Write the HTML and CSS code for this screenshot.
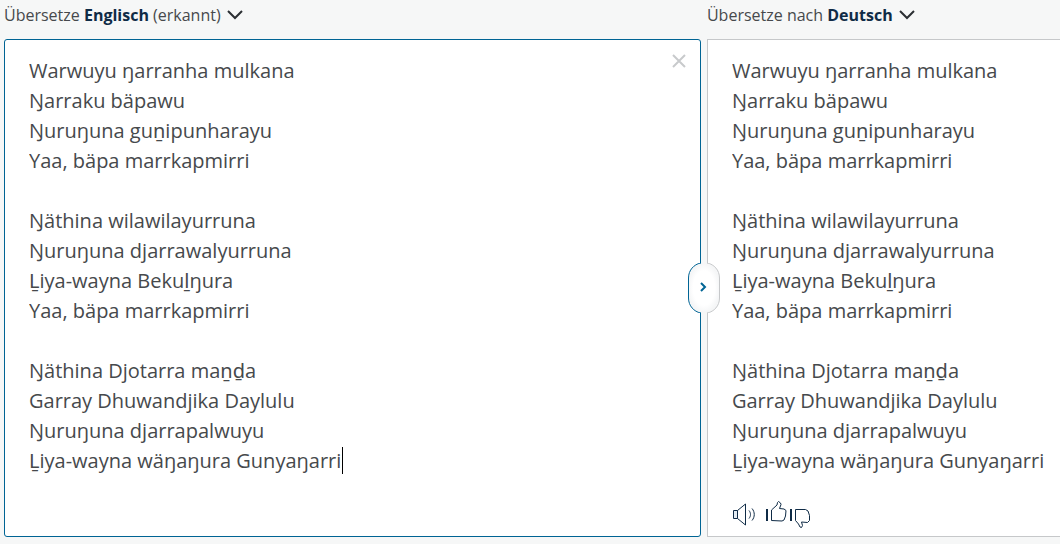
FILE: index.html
```html
<!DOCTYPE html>
<html lang="de">
<head>
  <meta charset="UTF-8" />
  <meta name="viewport" content="width=device-width, initial-scale=1.0" />
  <title>Übersetzer</title>
  <link rel="stylesheet" href="styles.css">
</head>
<body>
  <main class="translator">
    <section class="side">
      <header class="side-header">
        <button type="button" class="lang-btn">
          <span>Übersetze <strong>Englisch</strong> (erkannt)</span>
          <svg class="chevron" viewBox="0 0 16 10" aria-hidden="true"><path d="M1 1l7 7 7-7"/></svg>
        </button>
      </header>
      <div class="panel panel-source">
        <textarea class="text" id="source" rows="14" aria-label="Ausgangstext" spellcheck="false">Warwuyu ŋarranha mulkana
Ŋarraku bäpawu
Ŋuruŋuna guṉipunharayu
Yaa, bäpa marrkapmirri

Ŋäthina wilawilayurruna
Ŋuruŋuna djarrawalyurruna
Ḻiya-wayna Bekuḻŋura
Yaa, bäpa marrkapmirri

Ŋäthina Djotarra maṉḏa
Garray Dhuwandjika Daylulu
Ŋuruŋuna djarrapalwuyu
Ḻiya-wayna wäŋaŋura Gunyaŋarri</textarea>
        <span class="caret"></span>
        <button type="button" class="clear-btn" aria-label="Text löschen">
          <svg viewBox="0 0 14 14" aria-hidden="true"><path d="M1 1l12 12M13 1L1 13"/></svg>
        </button>
      </div>
      <!-- Swap languages -->
      <button type="button" class="swap-btn" aria-label="Sprachen tauschen">
        <svg viewBox="0 0 32 50" aria-hidden="true">
          <defs>
            <radialGradient id="swap-fill" cx="50%" cy="50%" r="50%">
              <stop offset="0.7" stop-color="#ffffff"/>
              <stop offset="1" stop-color="#f5f6f7"/>
            </radialGradient>
          </defs>
          <path class="swap-bg" d="M13 .5C6 1.5 .5 7 .5 15v20c0 8 5.5 13.5 12.5 14.5h6c7-1 12.5-6.5 12.5-14.5V15C31.5 7 26 1.5 19 .5z"/>
          <path class="swap-right" d="M19.5 0C26 1.5 31.5 7 31.5 15v20c0 8-5.5 13.5-12 15"/>
          <path class="swap-left" d="M12.5 0C6 1.5 .5 7 .5 15v20c0 8 5.5 13.5 12 15"/>
          <path class="swap-arrow" d="M13 20l4 4-4 4"/>
        </svg>
      </button>
    </section>

    <section class="side">
      <header class="side-header">
        <button type="button" class="lang-btn">
          <span>Übersetze nach <strong>Deutsch</strong></span>
          <svg class="chevron" viewBox="0 0 16 10" aria-hidden="true"><path d="M1 1l7 7 7-7"/></svg>
        </button>
      </header>
      <div class="panel panel-target">
        <textarea class="text" id="target" rows="14" aria-label="Übersetzung" spellcheck="false" readonly>Warwuyu ŋarranha mulkana
Ŋarraku bäpawu
Ŋuruŋuna guṉipunharayu
Yaa, bäpa marrkapmirri

Ŋäthina wilawilayurruna
Ŋuruŋuna djarrawalyurruna
Ḻiya-wayna Bekuḻŋura
Yaa, bäpa marrkapmirri

Ŋäthina Djotarra maṉḏa
Garray Dhuwandjika Daylulu
Ŋuruŋuna djarrapalwuyu
Ḻiya-wayna wäŋaŋura Gunyaŋarri</textarea>
        <div class="tools">
          <button type="button" class="tool-btn speak" aria-label="Vorlesen">
            <svg width="24" height="26" viewBox="0 0 24 26" aria-hidden="true">
              <path class="speaker-back" d="M1.5 9.5h4v8h-4z"/>
              <path d="M5.5 9.5l8-6.500v21l-8-6.500"/>
              <path d="M17 9.500c2 2.500 2 5.500 0 8M20 7.500c3 3.500 3 8.500 0 12"/>
            </svg>
          </button>
          <button type="button" class="tool-btn" aria-label="Gute Übersetzung">
            <svg width="22" height="26" viewBox="0 0 22 26" aria-hidden="true">
              <path class="bar" d="M2 8v12"/>
              <path d="M6.5 19.5V9l5.5-5 .5-2.5L13.5.5l2 1.500.5 1.500-1.500 4 4.500.5 2 1.500-.5 5.500-1.500 4-2 1z"/>
            </svg>
          </button>
          <button type="button" class="tool-btn" aria-label="Schlechte Übersetzung">
            <svg width="22" height="28" viewBox="0 0 22 28" aria-hidden="true">
              <path class="bar" d="M2 8v12"/>
              <path d="M6.5 8.500h10l2.500 1.500 1.500 4.500v5l-2 2-6-.5 1 3.500-1 2-1.500-.5-1.500-3-3-3.500z"/>
            </svg>
          </button>
        </div>
      </div>
    </section>
  </main>
</body>
</html>
```

FILE: styles.css
```css
*, *::before, *::after {
  box-sizing: border-box;
}

body {
  margin: 0;
  background: #f6f7f7;
  font-family: 'Open Sans', 'Noto Sans', sans-serif;
  color: #46494c;
  overflow-x: hidden;
}

button {
  margin: 0;
  padding: 0;
  border: 0;
  background: none;
  font: inherit;
  color: inherit;
  cursor: pointer;
}

.translator {
  display: grid;
  grid-template-columns: 66% 1fr;
  column-gap: 6px;
  padding: 0 0 7px 4px;
}

.side {
  position: relative;
  display: flex;
  flex-direction: column;
  min-width: 0;
}

.side-header {
  display: flex;
  height: 39px;
  padding-top: 4px;
}

.lang-btn {
  display: flex;
  align-items: center;
  gap: 6px;
  height: 22px;
  font-size: 16px;
  line-height: 22px;
  white-space: nowrap;
}

.lang-btn strong {
  color: #0f2b46;
}

.chevron {
  width: 16px;
  height: 10px;
  fill: none;
  stroke: #2b2f33;
  stroke-width: 2;
}

.panel {
  position: relative;
  flex: 1;
  padding: 16px 24px 0;
  background: #fff;
  border: 1px solid #c6c8ca;
}

.panel-source {
  border-color: #006494;
  border-radius: 3px;
}

.panel-target {
  border-right: 0;
  padding-right: 0;
}

.text {
  display: block;
  width: 100%;
  margin: 0;
  padding: 0;
  border: 0;
  outline: 0;
  resize: none;
  overflow: hidden;
  background: none;
  font: inherit;
  font-size: 20px;
  line-height: 30px;
  color: inherit;
}

.caret {
  position: absolute;
  top: 407px;
  left: 337px;
  width: 1px;
  height: 27px;
  background: #000;
}

.clear-btn {
  position: absolute;
  top: 14px;
  right: 14px;
  width: 14px;
  height: 14px;
}

.clear-btn svg {
  display: block;
  fill: none;
  stroke: #c8cacc;
  stroke-width: 2;
}

.swap-btn {
  position: absolute;
  top: 263px;
  right: -19px;
  z-index: 1;
  width: 32px;
  height: 50px;
}

.swap-btn svg {
  display: block;
  fill: none;
}

.swap-bg {
  fill: url(#swap-fill);
}

.swap-left {
  stroke: #006494;
}

.swap-right {
  stroke: #c6c8ca;
}

.swap-arrow {
  stroke: #006494;
  stroke-width: 2;
}

/* Icons hang from a shared top edge, the thumbs sit at different heights */
.tools {
  display: flex;
  align-items: flex-start;
  gap: 2px;
  height: 60px;
  padding-top: 25px;
}

.tool-btn svg {
  display: block;
  fill: none;
  stroke: #0f2b46;
  stroke-width: 1;
}

.tool-btn .bar {
  stroke-width: 2;
}

.tool-btn .speaker-back {
  fill: #e3ebf2;
}

.speak {
  margin-right: 7px;
}
```
